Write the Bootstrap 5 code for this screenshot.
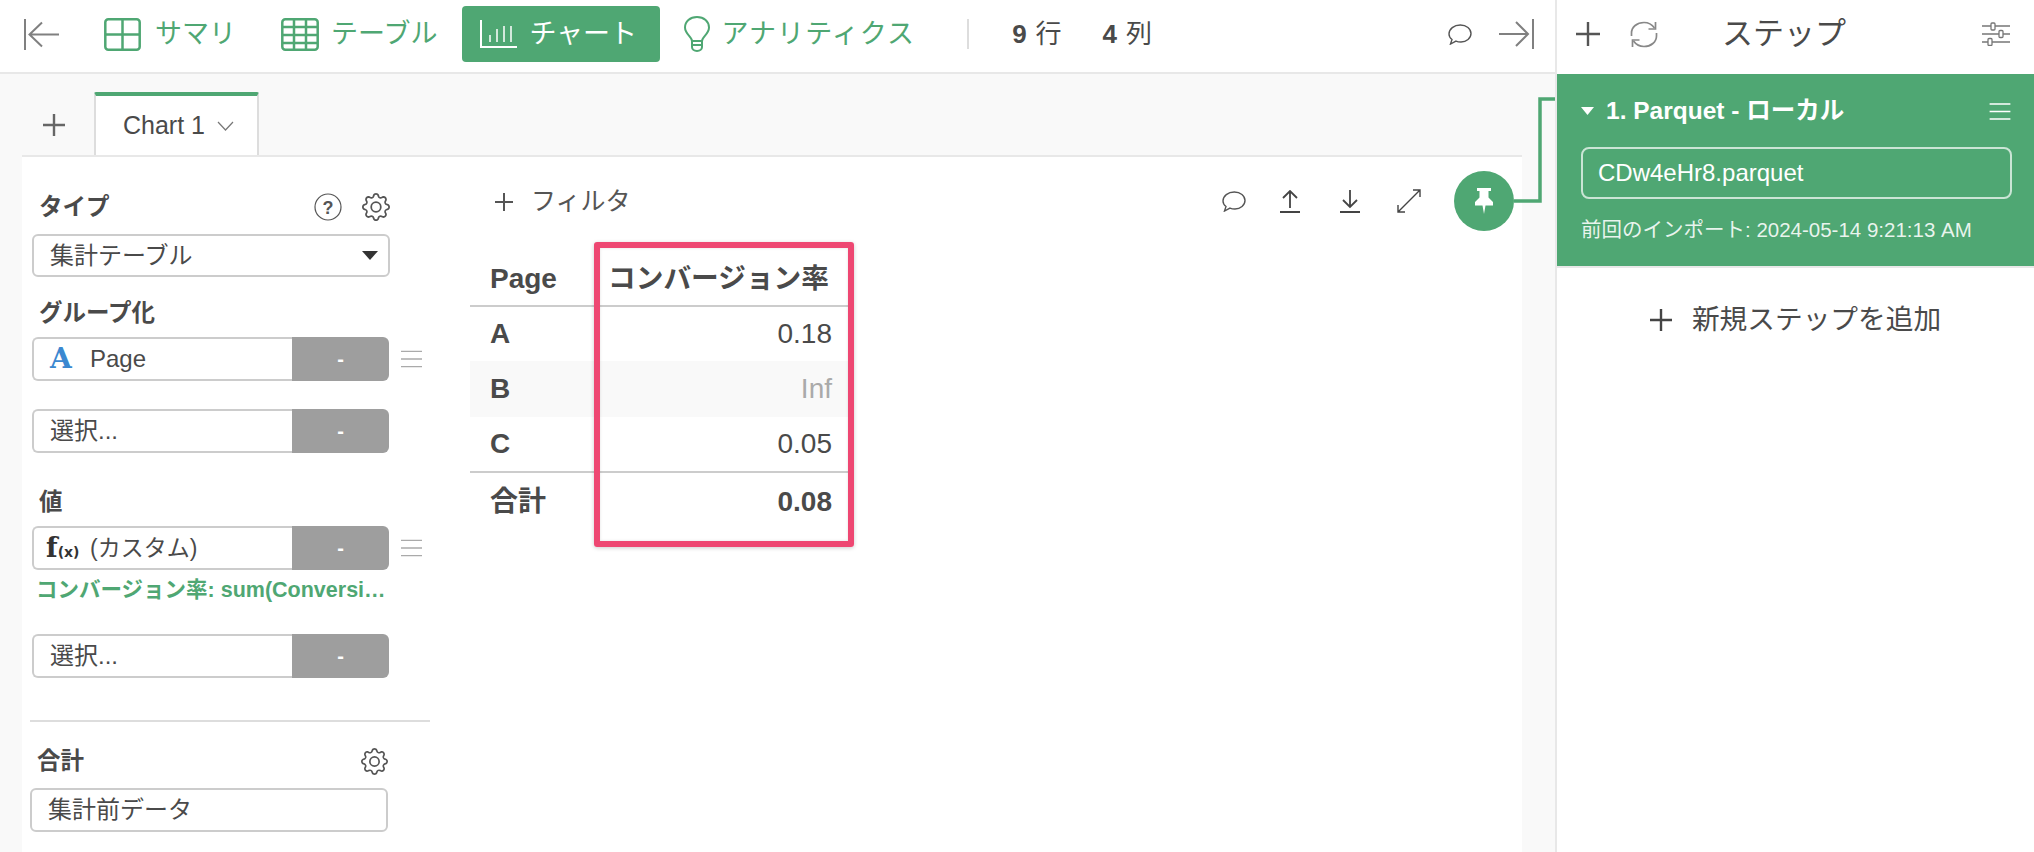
<!DOCTYPE html>
<html lang="ja">
<head>
    <meta charset="UTF-8">
    <meta name="viewport" content="width=device-width, initial-scale=1.0">
    <link href="https://cdn.jsdelivr.net/npm/bootstrap@5.3.0/dist/css/bootstrap.min.css" rel="stylesheet">
    <title>チャート</title>
    <style>
        :root { --green: #4fa773; --line: #e8e8e8; --ink: #4a4a4a; }
        body { font-family: "Liberation Sans", "Noto Sans CJK JP", sans-serif; color: var(--ink); background: #fff; overflow: hidden; }
        svg { display: block; flex: none; }
        .app { height: 852px; position: relative; }
        .main-col { width: 1557px; border-right: 2px solid var(--line); }

        .topbar { height: 74px; border-bottom: 2px solid var(--line); padding: 0 21px 4px 24px; font-size: 27px; }
        .top-item { color: var(--green); gap: 14px; text-decoration: none; }
        .top-item.active-view { background: var(--green); color: #fff; border-radius: 4px; height: 56px; width: 198px; gap: 12px; padding: 0 0 0 18px; margin: 0 24px 0 25px; }
        .counts { font-size: 26px; color: var(--ink); }
        .counts b { margin-right: 9px; }

        .work { background: #f9f9f9; padding: 0 33px 0 22px; height: 778px; }
        .tabrow { height: 81px; }
        .add-tab { width: 72px; padding-left: 21px; padding-top: 40px; }
        .chart-tab { width: 165px; height: 63px; margin-top: 18px; background: #fff; border: 2px solid #ddd; border-top: 4px solid var(--green); border-bottom: 0; border-radius: 2px 2px 0 0; font-size: 25px; padding-left: 27px; gap: 12px; position: relative; z-index: 1; margin-bottom: -2px; }
        .sheet { background: #fff; border-top: 2px solid var(--line); height: 697px; }

        .side { width: 410px; padding: 35px 0 0 10px; }
        .lbl { height: 30px; line-height: 30px; font-size: 23.500px; font-weight: 700; padding-left: 7px; width: 358px; }
        .pick { width: 358px; height: 44px; border: 2px solid #ccc; border-radius: 6px; font-size: 24px; padding: 0 0 0 16px; color: var(--ink); background: #fff; }
        .pick-row { width: 358px; height: 44px; flex-wrap: nowrap; }
        .pick-row .pick-main { flex: none; width: 261px; height: 44px; border: 2px solid #ccc; border-right: 0; border-radius: 6px 0 0 6px; background: #fff; font-size: 24px; padding: 0 0 0 16px; gap: 18px; }
        .pick-row .btn-minus { flex: none; width: 97px; height: 44px; background: #9e9e9e; color: #fff; border: 0; border-radius: 0 6px 6px 0; font-size: 20px; font-weight: 700; padding: 0; }
        .ico-a { color: #3b88d0; font-weight: 700; font-size: 28px; width: 22px; font-family: "DejaVu Serif", serif; line-height: 1; }
        .ico-f { font-weight: 700; font-size: 14px; width: 32px; margin-left: -2px; color: #333; white-space: nowrap; font-family: "DejaVu Sans", sans-serif; }
        .ico-f i { font-family: "DejaVu Serif", serif; font-style: normal; font-size: 27px; }
        .custom-name { font-size: 23px; }
        .calc-note { margin-left: 4px; height: 30px; line-height: 30px; font-size: 21.500px; font-weight: 700; color: var(--green); white-space: nowrap; margin-top: 5px; }
        .side-rule { width: 400px; height: 2px; background: #ddd; margin: 42px 0 0 -2px; }
        .mt-a { margin-top: 21px; } .mb-a { margin-bottom: 9px; }
        .mt-b { margin-top: 28px; }
        .mt-c { margin-top: 34px; } .mb-c { margin-bottom: 9px; }

        .chart-area { padding: 14px 8px 0 0; }
        .toolbar { height: 60px; padding-left: 61px; }
        .filter-lbl { font-size: 25px; gap: 16px; color: #555; padding-top: 2px; }
        .pin-btn { width: 60px; height: 60px; border-radius: 50%; background: var(--green); border: 0; padding: 0; margin-left: 33px; }
        .tbl-wrap { width: 378px; margin: 21px 0 0 38px; position: relative; }
        .tbl-wrap .table { width: 378px; margin: 0; font-size: 28px; color: var(--ink); table-layout: fixed; --bs-table-bg: transparent; --bs-table-color: var(--ink); }
        .tbl-wrap .table th, .tbl-wrap .table td { border: 0; padding: 0 16px 0 20px; vertical-align: middle; box-shadow: none; }
        .tbl-wrap th:first-child, .tbl-wrap td:first-child { font-weight: 700; }
        .tbl-wrap thead tr { height: 54px; }
        .tbl-wrap thead th { border-bottom: 2px solid #ccc !important; }
        .tbl-wrap .table thead th + th { font-size: 27.700px; padding: 0 19px 0 0; }
        .tbl-wrap tbody tr { height: 55px; }
        .tbl-wrap tbody tr.alt { background: #f9f9f9; height: 56px; color: #aaa; }
        .tbl-wrap tr.alt td:last-child { color: #aaa; }
        .tbl-wrap tfoot tr { height: 58px; }
        .tbl-wrap tfoot td { border-top: 2px solid #ccc !important; font-weight: 700; }
        .mark-box { position: absolute; left: 124px; top: -10px; width: 260px; height: 305px; border: 6px solid #ee4772; border-radius: 3px; box-shadow: 0 1px 4px rgba(0,0,0,.2), inset 0 0 3px rgba(0,0,0,.12); pointer-events: none; }

        .steps-col { width: 477px; }
        .steps-head { height: 74px; padding: 0 24px 6px 19px; }
        .steps-title { font-size: 31px; margin-left: 64px; color: var(--ink); }
        .step-card { background: var(--green); color: #fff; padding: 22px 22px 21px 24px; height: 192px; }
        .step-name { height: 30px; font-size: 24.500px; font-weight: 700; gap: 12px; }
        .step-input { height: 52px; margin-top: 21px; border: 2px solid rgba(255,255,255,.7); border-radius: 8px; font-size: 24px; padding-left: 15px; }
        .step-note { margin-top: 16px; font-size: 20.500px; line-height: 30px; color: rgba(255,255,255,.88); white-space: nowrap; }
        .step-rule { height: 2px; background: var(--line); }
        .add-step { margin-top: 32px; height: 40px; font-size: 27.700px; gap: 20px; color: var(--ink); }
        .link-wire { position: absolute; left: 1510px; top: 95px; pointer-events: none; }
    </style>
</head>
<body>
    <svg width="0" height="0" class="position-absolute">
        <symbol id="i-bubble" viewBox="0 0 24 21"><path d="M4 15.500C1.900 13.900 1 12 1 10 1 5 6 1 12.300 1 18.500 1 23 4.800 23 9.500S18.500 18 13 18c-2 0-3.600-.3-5-.9L2.500 20z" fill="none" stroke="currentColor" stroke-width="1.400"/></symbol>
        <symbol id="i-burger" viewBox="0 0 22 18"><path d="M0 1h22M0 9h22M0 17h22" stroke="currentColor" stroke-width="1.500" fill="none"/></symbol>
        <symbol id="i-gear" viewBox="0 0 16 16"><path fill="currentColor" d="M8 4.754a3.246 3.246 0 1 0 0 6.492 3.246 3.246 0 0 0 0-6.492zM5.754 8a2.246 2.246 0 1 1 4.492 0 2.246 2.246 0 0 1-4.492 0z"/><path fill="currentColor" d="M9.796 1.343c-.527-1.79-3.065-1.79-3.592 0l-.094.319a.873.873 0 0 1-1.255.52l-.292-.16c-1.64-.892-3.433.902-2.54 2.541l.159.292a.873.873 0 0 1-.52 1.255l-.319.094c-1.79.527-1.79 3.065 0 3.592l.319.094a.873.873 0 0 1 .52 1.255l-.16.292c-.892 1.64.901 3.434 2.541 2.54l.292-.159a.873.873 0 0 1 1.255.52l.094.319c.527 1.79 3.065 1.79 3.592 0l.094-.319a.873.873 0 0 1 1.255-.52l.292.16c1.64.893 3.434-.902 2.54-2.541l-.159-.292a.873.873 0 0 1 .52-1.255l.319-.094c1.79-.527 1.79-3.065 0-3.592l-.319-.094a.873.873 0 0 1-.52-1.255l.16-.292c.893-1.64-.902-3.433-2.541-2.54l-.292.159a.873.873 0 0 1-1.255-.52l-.094-.319zm-2.633.283c.246-.835 1.428-.835 1.674 0l.094.319a1.873 1.873 0 0 0 2.693 1.115l.291-.16c.764-.415 1.6.42 1.184 1.185l-.159.292a1.873 1.873 0 0 0 1.116 2.692l.318.094c.835.246.835 1.428 0 1.674l-.319.094a1.873 1.873 0 0 0-1.115 2.693l.16.291c.415.764-.42 1.6-1.185 1.184l-.291-.159a1.873 1.873 0 0 0-2.693 1.116l-.094.318c-.246.835-1.428.835-1.674 0l-.094-.319a1.873 1.873 0 0 0-2.692-1.115l-.292.16c-.764.415-1.6-.42-1.184-1.185l.159-.291A1.873 1.873 0 0 0 1.945 8.930l-.319-.094c-.835-.246-.835-1.428 0-1.674l.319-.094A1.873 1.873 0 0 0 3.060 4.377l-.16-.292c-.415-.764.42-1.6 1.185-1.184l.292.159a1.873 1.873 0 0 0 2.692-1.115l.094-.319z"/></symbol>
    </svg>

    <div class="app d-flex">
        <div class="main-col d-flex flex-column">
            <!-- top bar -->
            <header class="topbar d-flex align-items-center">
                <svg width="35" height="31" viewBox="0 0 35 31" style="margin-right:45px;color:#808080" fill="none" stroke="currentColor" stroke-width="2"><path d="M1 0v31M35 15.500H6M18 3.500 5.500 15.500 18 27.500"/></svg>
                <a class="top-item d-flex align-items-center" href="#">
                    <svg width="37" height="33" viewBox="0 0 37 33" fill="none" stroke="currentColor" stroke-width="2.500"><rect x="1.300" y="1.300" width="34.400" height="30.400" rx="3"/><path d="M18.500 1v31M1 16.500h35"/></svg>
                    <span>サマリ</span>
                </a>
                <a class="top-item d-flex align-items-center" href="#" style="margin-left:45px;gap:12px">
                    <svg width="38" height="33" viewBox="0 0 38 33" fill="none" stroke="currentColor" stroke-width="2.500"><rect x="1.300" y="1.300" width="35.400" height="30.400" rx="3"/><path d="M13 1v31M25 1v31M1 9h36M1 17h36M1 25h36"/></svg>
                    <span>テーブル</span>
                </a>
                <a class="top-item active-view d-flex align-items-center" href="#">
                    <svg width="37" height="28" viewBox="0 0 37 28" fill="none" stroke="currentColor" stroke-width="2"><path d="M1 0v27h36"/><path d="M10 15v7M17 9v13M24 6v16M31 6v16" stroke-width="1.500"/></svg>
                    <span>チャート</span>
                </a>
                <a class="top-item d-flex align-items-center" href="#" style="gap:11px">
                    <svg width="26" height="36" viewBox="0 0 26 36" fill="none" stroke="currentColor" stroke-width="2"><path d="M8 25c0-4-7-7-7-13.500C1 5.500 6 1 13 1s12 4.500 12 10.500C25 18 18 21 18 25z"/><path d="M8 25v6c0 2 2 4 5 4s5-2 5-4v-6M8 29h10"/></svg>
                    <span style="letter-spacing:1.100px">アナリティクス</span>
                </a>
                <div style="width:2px;height:30px;background:#ddd;margin:0 43px 0 52px"></div>
                <div class="counts d-flex">
                    <span><b>9</b>行</span>
                    <span style="margin-left:41px"><b>4</b>列</span>
                </div>
                <svg width="24" height="21" class="ms-auto" style="color:#555"><use href="#i-bubble"/></svg>
                <svg width="35" height="30" viewBox="0 0 35 30" style="margin-left:27px;color:#808080" fill="none" stroke="currentColor" stroke-width="2"><path d="M34 0v30M0 15h29M17 3l12 12-12 12"/></svg>
            </header>

            <div class="work d-flex flex-column">
                <div class="tabrow d-flex">
                    <div class="add-tab">
                        <svg width="22" height="22" viewBox="0 0 22 22" stroke="#666" stroke-width="2.400"><path d="M11 0v22M0 11h22"/></svg>
                    </div>
                    <div class="chart-tab d-flex align-items-center">
                        <span>Chart 1</span>
                        <svg width="17" height="10" viewBox="0 0 17 10" fill="none" stroke="#777" stroke-width="1.200"><path d="M1 1l7.500 8L16 1"/></svg>
                    </div>
                </div>

                <div class="sheet d-flex">
                    <!-- left settings -->
                    <aside class="side">
                        <div class="lbl d-flex align-items-center justify-content-between">
                            <span>タイプ</span>
                            <span class="d-flex" style="gap:20px">
                                <svg width="28" height="28" viewBox="0 0 28 28"><circle cx="14" cy="14" r="13" fill="none" stroke="#555" stroke-width="1.200"/><text x="14" y="20.500" text-anchor="middle" font-size="18" fill="#555" font-family="Liberation Sans">?</text></svg>
                                <svg width="28" height="28" style="color:#555"><use href="#i-gear"/></svg>
                            </span>
                        </div>
                        <div class="pick d-flex align-items-center justify-content-between" style="margin-top:12px;height:43px;padding-right:10px">
                            <span>集計テーブル</span>
                            <svg width="16" height="9" viewBox="0 0 16 9"><path d="M0 0h16L8 9z" fill="#333"/></svg>
                        </div>

                        <div class="lbl mt-a mb-a">グループ化</div>
                        <div class="d-flex align-items-center">
                            <div class="input-group pick-row">
                                <div class="pick-main d-flex align-items-center"><span class="ico-a">A</span><span>Page</span></div>
                                <button class="btn-minus">-</button>
                            </div>
                            <svg width="21" height="18" style="margin-left:11px;color:#aaa"><use href="#i-burger"/></svg>
                        </div>
                        <div class="input-group pick-row mt-b">
                            <div class="pick-main d-flex align-items-center">選択...</div>
                            <button class="btn-minus">-</button>
                        </div>

                        <div class="lbl mt-c mb-c">値</div>
                        <div class="d-flex align-items-center">
                            <div class="input-group pick-row">
                                <div class="pick-main d-flex align-items-center" style="padding-left:14px;gap:12px"><span class="ico-f"><i>f</i>(x)</span><span class="custom-name">(カスタム)</span></div>
                                <button class="btn-minus">-</button>
                            </div>
                            <svg width="21" height="18" style="margin-left:11px;color:#aaa"><use href="#i-burger"/></svg>
                        </div>
                        <div class="calc-note">コンバージョン率: sum(Conversi…</div>
                        <div class="input-group pick-row" style="margin-top:29px">
                            <div class="pick-main d-flex align-items-center">選択...</div>
                            <button class="btn-minus">-</button>
                        </div>

                        <div class="side-rule"></div>

                        <div class="lbl d-flex align-items-center justify-content-between" style="margin-top:24px;margin-left:-2px">
                            <span>合計</span>
                            <svg width="27" height="27" style="color:#555"><use href="#i-gear"/></svg>
                        </div>
                        <div class="pick d-flex align-items-center" style="margin:12px 0 0 -2px">集計前データ</div>
                    </aside>

                    <!-- chart -->
                    <section class="chart-area flex-grow-1">
                        <div class="toolbar d-flex align-items-center">
                            <div class="filter-lbl d-flex align-items-center">
                                <svg width="22" height="22" viewBox="0 0 22 22" stroke="#555" stroke-width="2"><path d="M11 2v18M2 11h18"/></svg>
                                <span>フィルタ</span>
                            </div>
                            <svg width="24" height="21" class="ms-auto" style="color:#555"><use href="#i-bubble"/></svg>
                            <svg width="20" height="23" viewBox="0 0 20 23" style="margin-left:34px" fill="none" stroke="#444" stroke-width="1.800"><path d="M10 18V1M3 8l7-7 7 7M0 22h20"/></svg>
                            <svg width="20" height="23" viewBox="0 0 20 23" style="margin-left:40px" fill="none" stroke="#444" stroke-width="1.800"><path d="M10 0v17M3 10l7 7 7-7M0 22h20"/></svg>
                            <svg width="24" height="24" viewBox="0 0 24 24" style="margin-left:37px" fill="none" stroke="#444" stroke-width="1.400"><path d="M1 23 23 1M16 1h7v7M8 23H1v-7"/></svg>
                            <button class="pin-btn d-flex align-items-center justify-content-center">
                                <svg width="20" height="26" viewBox="0 0 20 26" fill="#fff"><path d="M3 0h14v3h-2.500v6.500L19 14v3.500h-7.500L10 26l-1.500-8.500H1V14l4.500-4.500V3H3z"/></svg>
                            </button>
                        </div>
                        <div class="tbl-wrap">
                            <table class="table">
                                <colgroup><col style="width:124px"><col></colgroup>
                                <thead>
                                    <tr><th>Page</th><th class="text-end text-nowrap">コンバージョン率</th></tr>
                                </thead>
                                <tbody>
                                    <tr><td>A</td><td class="text-end">0.18</td></tr>
                                    <tr class="alt"><td style="color:var(--ink)">B</td><td class="text-end">Inf</td></tr>
                                    <tr><td>C</td><td class="text-end">0.05</td></tr>
                                </tbody>
                                <tfoot>
                                    <tr><td>合計</td><td class="text-end">0.08</td></tr>
                                </tfoot>
                            </table>
                            <div class="mark-box"></div>
                        </div>
                    </section>
                </div>
            </div>
        </div>

        <!-- steps -->
        <div class="steps-col d-flex flex-column">
            <div class="steps-head d-flex align-items-center">
                <svg width="24" height="24" viewBox="0 0 24 24" stroke="#555" stroke-width="2.400"><path d="M12 0v24M0 12h24"/></svg>
                <svg width="28" height="27" viewBox="0 0 28 27" style="margin-left:30px" fill="none" stroke="#888" stroke-width="1.700"><path d="M1.500 15V12C1.500 6 7 1.500 14 1.500c4.500 0 8 2 10.500 5.500M26.500 12v3c0 6-5.500 10.500-12.500 10.500-4.500 0-8-2-10.500-5.500"/><path d="M25.500 1v7h-7M2.500 26v-7h7"/></svg>
                <span class="steps-title">ステップ</span>
                <svg width="28" height="24" viewBox="0 0 28 24" class="ms-auto" fill="#fff" stroke="#777" stroke-width="1.300"><path d="M0 4h28M0 12h28M0 20h28"/><rect x="9" y="1" width="4" height="7" rx="1"/><rect x="17" y="8.500" width="4" height="7" rx="1"/><rect x="6" y="16.500" width="4" height="7" rx="1"/></svg>
            </div>
            <div class="step-card">
                <div class="step-name d-flex align-items-center">
                    <svg width="13" height="8" viewBox="0 0 13 8"><path d="M0 0h13L6.500 8z" fill="#fff"/></svg>
                    <span>1. Parquet - ローカル</span>
                    <svg width="22" height="17" class="ms-auto" style="color:#fff;margin-right:1px"><use href="#i-burger"/></svg>
                </div>
                <div class="step-input d-flex align-items-center">CDw4eHr8.parquet</div>
                <div class="step-note">前回のインポート: 2024-05-14 9:21:13 AM</div>
            </div>
            <div class="step-rule"></div>
            <div class="add-step d-flex align-items-center justify-content-center">
                <svg width="22" height="22" viewBox="0 0 22 22" stroke="#444" stroke-width="2.400"><path d="M11 0v22M0 11h22"/></svg>
                <span>新規ステップを追加</span>
            </div>
        </div>

        <svg class="link-wire" width="47" height="110" viewBox="0 0 47 110" fill="none" stroke="#4fa773" stroke-width="3.500"><path d="M4 106h26V4h15"/></svg>
    </div>

    <script src="https://cdn.jsdelivr.net/npm/bootstrap@5.3.0/dist/js/bootstrap.bundle.min.js"></script>
</body>
</html>
